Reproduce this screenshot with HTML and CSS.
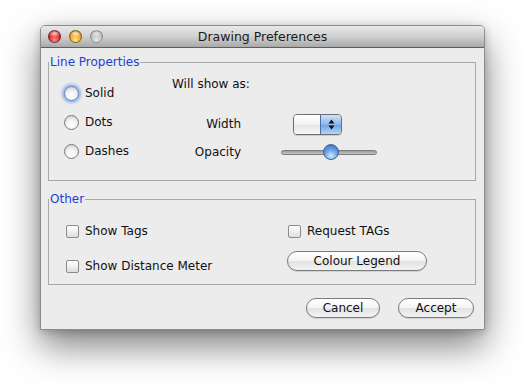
FILE: index.html
```html
<!DOCTYPE html>
<html lang="en">
<head>
    <meta charset="UTF-8">
    <title>Drawing Preferences</title>
    <link rel="stylesheet" href="styles.css">
</head>
<body>
    <div class="window">
        <div class="titlebar">
            <div class="lights">
                <span class="light red"></span>
                <span class="light orange"></span>
                <span class="light gray"></span>
            </div>
            <div class="title">Drawing Preferences</div>
        </div>

        <div class="content">
            <fieldset class="group">
                <legend>Line Properties</legend>
                <div class="line-props">
                    <div class="radios">
                        <label class="row"><span class="radio focus"></span>Solid</label>
                        <label class="row"><span class="radio"></span>Dots</label>
                        <label class="row"><span class="radio"></span>Dashes</label>
                    </div>
                    <div class="preview">
                        <div class="will-show">Will show as:</div>
                        <div class="prop-row">
                            <span class="prop-label">Width</span>
                            <div class="spinner">
                                <div class="spinner-field"></div>
                                <div class="spinner-arrows">
                                    <svg width="7" height="11" viewBox="0 0 7 11">
                                        <path d="M3.5 0.5 L6.5 4.5 L0.5 4.5 Z" fill="#111"/>
                                        <path d="M3.5 10.5 L6.5 6.5 L0.5 6.5 Z" fill="#111"/>
                                    </svg>
                                </div>
                            </div>
                        </div>
                        <div class="prop-row">
                            <span class="prop-label">Opacity</span>
                            <div class="slider">
                                <div class="track"></div>
                                <div class="thumb"></div>
                            </div>
                        </div>
                    </div>
                </div>
            </fieldset>

            <fieldset class="group other">
                <legend>Other</legend>
                <div class="other-grid">
                    <div class="col left">
                        <label class="row"><span class="check"></span>Show Tags</label>
                        <label class="row"><span class="check"></span>Show Distance Meter</label>
                    </div>
                    <div class="col right">
                        <label class="row"><span class="check"></span>Request TAGs</label>
                        <button class="pill legend-btn">Colour Legend</button>
                    </div>
                </div>
            </fieldset>

            <div class="actions">
                <button class="pill cancel">Cancel</button>
                <button class="pill accept">Accept</button>
            </div>
        </div>
    </div>
</body>
</html>
```

FILE: styles.css
```css
* {
    box-sizing: border-box;
}
html, body {
    height: 100%;
}
body {
    margin: 0;
    padding-top: 25px;
    background: #fff;
    font-family: "DejaVu Sans", sans-serif;
    font-size: 12px;
    color: #111;
}
.window {
    margin-left: 40px;
    width: 445px;
    height: 305px;
    background: #ececec;
    border: 1px solid #8c8c8c;
    border-radius: 5px 5px 0 0;
    box-shadow: 0 16px 36px rgba(0, 0, 0, 0.5), 0 2px 8px rgba(0, 0, 0, 0.2);
    display: flex;
    flex-direction: column;
}
.titlebar {
    height: 22px;
    border-bottom: 1px solid #5e5e5e;
    border-radius: 4px 4px 0 0;
    background: linear-gradient(#e9e9e9, #d0d0d0 50%, #a9a9a9);
    display: flex;
    align-items: center;
    padding-left: 7px;
    position: relative;
}
.lights {
    display: flex;
    gap: 8px;
}
.light {
    width: 13px;
    height: 13px;
    border-radius: 50%;
    border: 1px solid rgba(0, 0, 0, 0.45);
}
.red {
    background: radial-gradient(ellipse 60% 35% at 50% 22%, rgba(255, 255, 255, 0.8), rgba(255, 255, 255, 0) 100%),
        radial-gradient(circle at 50% 80%, #ff8c82 0, #e0242a 55%, #8e0a0d 100%);
}
.orange {
    background: radial-gradient(ellipse 60% 35% at 50% 22%, rgba(255, 255, 255, 0.8), rgba(255, 255, 255, 0) 100%),
        radial-gradient(circle at 50% 80%, #ffe98a 0, #f0a01d 55%, #9a5b08 100%);
}
.gray {
    background: radial-gradient(ellipse 60% 35% at 50% 22%, rgba(255, 255, 255, 0.7), rgba(255, 255, 255, 0) 100%),
        radial-gradient(circle at 50% 80%, #e8e8e8 0, #bdbdbd 55%, #8c8c8c 100%);
    border-color: rgba(0, 0, 0, 0.25);
}
.title {
    position: absolute;
    left: 0;
    right: 0;
    text-align: center;
    font-size: 12.5px;
    color: #1a1a1a;
    pointer-events: none;
}
.content {
    padding: 6px 8px 0 7px;
    display: flex;
    flex-direction: column;
}
.group {
    margin: 0;
    padding: 0;
    border: 1px solid #a8a8a8;
    min-width: 0;
}
.group legend {
    padding: 0 1px;
    line-height: 16px;
    color: #1d3fd2;
}
.other {
    margin-top: 10px;
}
.row {
    display: flex;
    align-items: center;
    height: 22px;
    white-space: nowrap;
}
.line-props {
    display: flex;
    align-items: flex-start;
    padding: 6px 0 17px 15px;
}
.radios {
    width: 108px;
    padding-top: 6px;
    display: flex;
    flex-direction: column;
    gap: 7px;
}
.radio {
    width: 15px;
    height: 15px;
    border-radius: 50%;
    border: 1px solid #7a7a7a;
    background: radial-gradient(circle at 50% 70%, #ffffff 0, #f2f2f2 45%, #c9c9c9 100%);
    margin-right: 6px;
}
.radio.focus {
    border-color: #5b7fb0;
    box-shadow: 0 0 0 1px #9ec0ea, 0 0 3px 2px #8fb4e6;
}
.preview {
    display: flex;
    flex-direction: column;
    gap: 6px;
}
.will-show {
    line-height: 16px;
    margin-bottom: 15px;
}
.prop-row {
    display: flex;
    align-items: center;
    height: 22px;
}
.prop-label {
    width: 69px;
    text-align: right;
}
.spinner {
    margin-left: 52px;
    width: 49px;
    height: 21px;
    display: flex;
    border: 1px solid #6f6f6f;
    border-radius: 4px;
    overflow: hidden;
    box-shadow: 0 1px 1px rgba(0, 0, 0, 0.15);
}
.spinner-field {
    flex: 1;
    background: linear-gradient(#ffffff, #f3f3f3 50%, #e6e6e6 51%, #f6f6f6);
}
.spinner-arrows {
    width: 21px;
    display: flex;
    align-items: center;
    justify-content: center;
    border-left: 1px solid #4d6fa8;
    background: linear-gradient(#cfe2f8, #8bb7ea 50%, #6aa1e3 51%, #b6d6f7);
}
.slider {
    margin-left: 40px;
    width: 96px;
    height: 16px;
    position: relative;
    display: flex;
    align-items: center;
}
.track {
    width: 100%;
    height: 5px;
    border-radius: 3px;
    border: 1px solid #7d7d7d;
    background: linear-gradient(#9a9a9a, #c4c4c4);
}
.thumb {
    position: absolute;
    left: 42px;
    top: 0;
    width: 16px;
    height: 16px;
    border-radius: 50%;
    border: 1px solid #40618f;
    background: radial-gradient(circle at 50% 78%, #d6ecff 0, #6da5e6 45%, #2f69c0 100%);
}
.other-grid {
    display: flex;
    padding: 13px 0 7px 17px;
}
.col {
    display: flex;
    flex-direction: column;
}
.left {
    width: 221px;
    gap: 13px;
}
.right {
    gap: 9px;
}
.check {
    width: 13px;
    height: 13px;
    border: 1px solid #8a8a8a;
    border-radius: 2px;
    background: linear-gradient(#ffffff, #f0f0f0 50%, #dedede);
    margin-right: 6px;
}
.right .check {
    margin-left: 1px;
}
.pill {
    font-family: inherit;
    font-size: 12px;
    color: #111;
    height: 20px;
    padding: 0;
    border: 1px solid #7b7b7b;
    border-radius: 10px;
    background: linear-gradient(#ffffff, #f4f4f4 50%, #e2e2e2 51%, #f3f3f3);
    box-shadow: 0 1px 1px rgba(0, 0, 0, 0.12);
}
.legend-btn {
    width: 140px;
}
.actions {
    display: flex;
    justify-content: flex-end;
    gap: 18px;
    margin-top: 13px;
    padding-right: 2px;
}
.cancel {
    width: 74px;
}
.accept {
    width: 76px;
}
```
